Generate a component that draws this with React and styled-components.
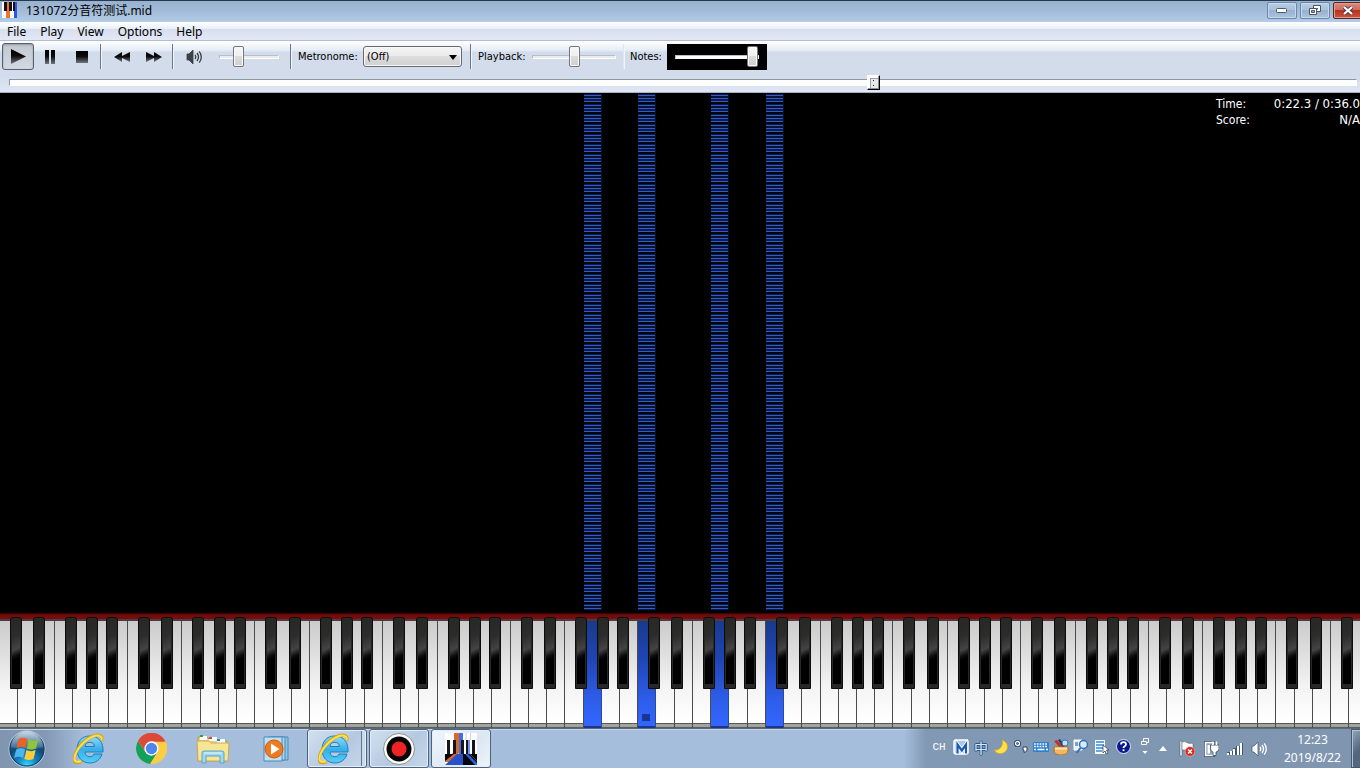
import React from "react";
import styled, { createGlobalStyle, css } from "styled-components";

const UI = `"Noto Sans", "Noto Sans CJK SC", sans-serif`;
const TAHOMA = `"DejaVu Sans Condensed", "DejaVu Sans", "Noto Sans CJK SC", sans-serif`;

const GlobalStyle = createGlobalStyle`
  *, *::before, *::after { box-sizing: border-box; }
  body { margin: 0; background: #000; font-family: ${UI}; overflow-x: hidden; }
  button, select, input { font: inherit; margin: 0; padding: 0; }
  svg { display: block; flex: none; }
`;

const Desktop = styled.div`
  display: flex;
  flex-direction: column;
  min-height: 100vh;
  overflow: hidden;
`;

/* ---------- window frame ---------- */
const TitleBar = styled.header`
  display: flex;
  align-items: flex-start;
  height: 22px;
  padding-left: 2px;
  border-top: 1px solid #26384c;
  background: linear-gradient(#98b1ce, #a2bcd9 50%, #b3cde8);
`;
const TitleIcon = styled.span`
  margin-top: 1px;
`;
const Title = styled.h1`
  flex: 1;
  margin: 0 0 0 8px;
  font: 12px/19px ${UI};
  color: #000;
`;
const CaptionButtons = styled.div`
  display: flex;
  gap: 3px;
  margin: 1px -3px 0 0;
`;
const CaptionButton = styled.button`
  display: grid;
  place-items: center;
  width: 30px;
  height: 17px;
  border: 1px solid ${(p) => (p.$close ? "#5b2422" : "#6d86a5")};
  border-radius: 2px;
  box-shadow: inset 0 0 0 1px ${(p) => (p.$close ? "#e39c90" : "#c6d9ee")};
  background: ${(p) =>
    p.$close
      ? "linear-gradient(#d98a7c, #cf6a5a 48%, #b8321e 50%, #c9553f)"
      : "linear-gradient(#b7cce4, #a9c1dc 48%, #97b1d0 50%, #a9c3e0)"};
`;

const MenuBar = styled.nav`
  display: flex;
  height: 19px;
  padding-left: 7px;
  gap: 14px;
  border-bottom: 1px solid #b4bccd;
  background: linear-gradient(#fff, #e9eff7 38%, #d6dfee 40%, #e4e7f6);
`;
const MenuItem = styled.button`
  border: 0;
  background: none;
  font: 12px/20px ${UI};
  color: #000;
`;

const Tools = styled.div`
  height: 52px;
  border-bottom: 1px solid #a9b0be;
  background: linear-gradient(#fff, #e6edf7 18%, #d3dcea 22%, #d3dcec 70%, #e0e7f5);
`;
const ToolRow = styled.div`
  display: flex;
  align-items: center;
  height: 31px;
  padding-left: 2px;
`;
const ToolButton = styled.button`
  display: grid;
  place-items: center;
  width: 32px;
  height: 27px;
  border: 1px solid transparent;
  border-radius: 3px;
  background: none;
  ${(p) =>
    p.$pressed &&
    css`
      border-color: #55606e;
      background: linear-gradient(#c3c8d0, #d3d9e2);
      box-shadow: inset 0 1px 2px #9098a4;
    `}
`;
const Separator = styled.span`
  width: 2px;
  height: 25px;
  margin: 0 ${(p) => p.$after}px 0 ${(p) => p.$before}px;
  border-left: 1px solid ${(p) => (p.$soft ? "#dfe6f1" : "#6c7688")};
  border-right: 1px solid #f2f6fb;
`;
const Label = styled.label`
  width: ${(p) => p.$width}px;
  white-space: nowrap;
  padding-top: 1px;
  font: 11px/14px ${TAHOMA};
  color: #000;
`;
const SelectBox = styled.span`
  position: relative;
  display: block;
`;
const Select = styled.select`
  display: block;
  appearance: none;
  width: 99px;
  height: 21px;
  padding-left: 3px;
  border: 1px solid #656a70;
  border-radius: 3px;
  background: linear-gradient(#f4f4f4, #ebebeb 48%, #dddddd 50%, #d0d0d0);
  box-shadow: inset 0 0 0 1px #f8f8f8;
  font: 11px/18px ${TAHOMA};
  color: #000;
`;
const SelectArrow = styled.svg`
  position: absolute;
  right: 5px;
  top: 9px;
  pointer-events: none;
`;
const VolumeSlot = styled.span`
  padding: 0 11px 0 9px;
`;
const Range = styled.input`
  appearance: none;
  display: block;
  width: ${(p) => p.$width}px;
  height: 22px;
  background: transparent;
  &::-webkit-slider-runnable-track {
    height: 4px;
    border: 1px solid #b9bfc8;
    border-bottom-color: #fff;
    border-right-color: #fff;
    background: ${(p) => (p.$bright ? "#fff" : "#e9ecef")};
  }
  &::-webkit-slider-thumb {
    appearance: none;
    width: 11px;
    height: 21px;
    margin-top: -10px;
    border: 1px solid #73777d;
    border-radius: 2px;
    background: linear-gradient(#f6f6f6, #efefef 48%, #dcdcdc 50%, #d0d0d0);
    box-shadow: inset 0 0 0 1px #fafafa;
  }
`;
const NotesBox = styled.span`
  display: grid;
  place-items: center;
  width: 100px;
  height: 26px;
  background: #000;
`;
const SeekRow = styled.div`
  padding: 3px 3px 0 9px;
`;
const Seek = styled.input`
  appearance: none;
  display: block;
  width: 100%;
  height: 15px;
  background: transparent;
  &::-webkit-slider-runnable-track {
    height: 7px;
    border: 1px solid #8f969f;
    border-bottom-color: #fff;
    border-right-color: #fff;
    background: #fff;
  }
  &::-webkit-slider-thumb {
    appearance: none;
    width: 13px;
    height: 15px;
    margin-top: -5px;
    border: 1px solid #fff;
    border-right-color: #000;
    border-bottom-color: #000;
    background:
      linear-gradient(#222, #222) 5px 4px / 1px 1px no-repeat,
      linear-gradient(#222, #222) 5px 9px / 1px 1px no-repeat,
      #e6e8ea;
    box-shadow: inset -1px -1px 0 #8a8f96, inset 2px 2px 0 #fff, inset 3px 3px 0 #9ca1a8;
  }
`;

/* ---------- falling notes ---------- */
const Stage = styled.main`
  display: flex;
  flex-direction: column;
  flex: 1;
  position: relative;
  min-height: 300px;
  background: #000;
`;
const Lanes = styled.div`
  display: flex;
  flex: 1;
  width: calc(100% + 7px);
  padding: 1px 0 3px;
`;
const Lane = styled.div`
  flex: 1 1 0;
  min-width: 0;
  border: solid #000;
  border-width: 0 1px 0 0;
  ${(p) =>
    p.$on &&
    css`
      border-color: #06102c;
      background: repeating-linear-gradient(
        #0a1b50 0 1px,
        #365cba 1px 2px,
        #07123c 2px 4px,
        #365cba 4px 5px,
        #0a1b55 5px 7px,
        #365cba 7px 8px,
        #02040c 8px 10px
      );
    `}
`;
const Stats = styled.dl`
  position: absolute;
  top: 3px;
  right: 0;
  display: grid;
  grid-template-columns: auto auto;
  justify-content: space-between;
  width: 144px;
  margin: 0;
  font: 12px/16px ${TAHOMA};
  color: #fff;
  dt, dd { margin: 0; }
  dd { font-size: 13px; text-align: right; }
`;

/* ---------- keyboard ---------- */
const Felt = styled.div`
  height: 8px;
  border-bottom: 2px solid #4a3e3e;
  background: linear-gradient(#2c0203, #6d0a0c 30%, #7d0c0e);
`;
const Keyboard = styled.div`
  display: flex;
  width: calc(100% + 7px);
  height: 107px;
`;
const WhiteKey = styled.div`
  position: relative;
  flex: 1 1 0;
  min-width: 0;
  border-right: 1px solid ${(p) => (p.$on ? "#2a4a9c" : "#4b4b4b")};
  background: ${(p) =>
    p.$on
      ? "linear-gradient(#183a8c, #1f45b4 35%, #2d5de8 72%, #3366ff 105px, #1a3690 105px)"
      : `linear-gradient(#cbcbcb, #e2e2e2 35%, #f4f4f4 62%, #fff 100px, #fff 102px,
         #55564f 102px, #55564f 103px, #a4a7a2 103px, #9fa19d 106px, #5b5f62 106px)`};
`;
const BlackKey = styled.div`
  position: absolute;
  z-index: 1;
  top: -4px;
  left: ${(p) => p.$left}px;
  width: 12px;
  height: 72px;
  border: 1px solid #0c0c0c;
  border-radius: 3px 3px 0 0;
  background: #282828;
  &::before {
    content: "";
    display: block;
    height: 66px;
    margin: 0 1px;
    background: linear-gradient(155deg, #272724, #2c2c2c 28%, #444 47%, #0c0c0c 57%, #000 62%);
  }
`;
const Marker = styled.span`
  position: absolute;
  left: 4px;
  bottom: 7px;
  width: 8px;
  height: 7px;
  background: #1a3690;
`;

/* ---------- taskbar ---------- */
const Taskbar = styled.footer`
  display: flex;
  height: 40px;
  border-top: 1px solid #5c6977;
  box-shadow: inset 0 1px 0 #c6d8ec;
  background: linear-gradient(90deg, #8096b0, #8399b5 46px, #a5bedb 84px, #a5bedb);
`;
const Launchers = styled.div`
  display: flex;
  flex: 1;
`;
const Launcher = styled.button`
  display: grid;
  place-items: center;
  width: ${(p) => p.$width}px;
  height: 39px;
  border: 0;
  background: none;
`;
const TaskButton = styled.button`
  display: grid;
  place-items: center;
  width: 60px;
  height: 39px;
  margin-right: 2px;
  border: 1px solid #4d627c;
  border-radius: 3px;
  box-shadow: inset 0 0 0 1px #e4eef8;
  background: ${(p) =>
    p.$active
      ? "linear-gradient(135deg, #f0f5fb, #dbe7f3 60%, #eef4fa)"
      : "linear-gradient(135deg, #d3e0ef, #b4c9e1 55%, #c6d7ea)"};
  ${(p) =>
    p.$stacked &&
    css`
      padding-right: 6px;
      box-shadow: inset 0 0 0 1px #e4eef8, inset -4px 0 0 #c9d9ea, inset -5px 0 0 #5f7690;
    `}
`;
const Tray = styled.div`
  display: flex;
  align-items: center;
  padding-left: 23px;
  background: linear-gradient(90deg, #a5bedb00, #8199b4 22px, #7f95b0);
`;
const TrayButton = styled.button`
  display: grid;
  place-items: center;
  width: ${(p) => p.$width || 20}px;
  height: 39px;
  padding: 0 ${(p) => (p.$padRight ? 4 : 0)}px ${(p) => (p.$ime ? 4 : 0)}px 0;
  border: 0;
  background: none;
  font: 11px/14px "Liberation Mono", monospace;
  color: #fff;
`;
const ImeMode = styled.span`
  font: 14px/16px "Noto Sans CJK SC", sans-serif;
  color: #d9e9fb;
  text-shadow: 1px 0 #2c588e, -1px 0 #2c588e, 0 1px #2c588e, 0 -1px #2c588e;
`;
const Clock = styled.time`
  width: 80px;
  padding-left: 3px;
  text-align: center;
  font: 12px/18px ${UI};
  color: #fff;
`;
const ShowDesktop = styled.button`
  width: 9px;
  height: 39px;
  border: 1px solid #46586d;
  border-right: 0;
  box-shadow: inset 1px 1px 0 #b3c3d6;
  background: linear-gradient(135deg, #95a6ba, #53667d 60%);
`;

/* ---------- drawings ---------- */
const AppIcon = ({ size }) => (
  <svg width={size} height={size} viewBox="0 0 32 32" aria-hidden="true">
    <rect width="32" height="32" fill="#fff" />
    <path d="M9 0h5v20L4 29H0v-2l9-8z" fill="#d9692a" />
    <path d="M14 0h4v21H14z" fill="#3f70e8" />
    <path d="M22 7h3v14h-3z" fill="#6b95f4" />
    <path d="M12 21h6v11H0z" fill="#2950c8" />
    <path d="M18 21h7l7 7v4H18z" fill="#05070f" />
    <path d="M20 21h3l9 9v2h-2z" fill="#2f5fe0" />
    <path d="M0 21h9l-9 7z" fill="#000" />
    <path d="M25 21h7v7z" fill="#000" />
    <path d="M2 7h3v14H2zM8 7h3v14H8zM16 7h3v14h-3zM21 7h2v14h-2zM27 7h3v14h-3z" fill="#16161a" />
    <path d="M20 0h1v7M25.500 0v7" fill="none" stroke="#b9c4d6" strokeWidth="0.800" />
  </svg>
);
const TitleAppIcon = () => (
  <svg width="16" height="16" viewBox="0 0 16 16" aria-hidden="true">
    <path d="M0 0h4v16H0z" fill="#fff" />
    <path d="M4 0h4v16H4z" fill="#e87830" />
    <path d="M8 0h4v16H8z" fill="#fff" />
    <path d="M12 0h3v16h-3z" fill="#2c55e0" />
    <path d="M2 0h3v9H2zM7 0h3v9H7zM11 0h2v9h-2z" fill="#161010" />
  </svg>
);
const Grad = ({ id }) => (
  <defs>
    <linearGradient id={id} x1="0" y1="0" x2="0" y2="1">
      <stop offset="0" stopColor="#000" />
      <stop offset="0.45" stopColor="#0a0a0a" />
      <stop offset="1" stopColor="#70767e" />
    </linearGradient>
  </defs>
);
const glyphs = {
  play: [15, 15, "M0 0 15 7.500 0 15z"],
  pause: [10, 14, "M0 0h4v14H0zM6 0h4v14H6z"],
  stop: [12, 12, "M0 0h12v12H0z"],
  rewind: [16, 10, "M0 5 8 0V4L16 0V10L8 6V10z"],
  forward: [16, 10, "M16 5 8 0V4L0 0V10L8 6V10z"],
};
const Glyph = ({ name }) => {
  const [w, h, d] = glyphs[name];
  return (
    <svg width={w} height={h} viewBox={`0 0 ${w} ${h}`} aria-hidden="true">
      <Grad id={`g-${name}`} />
      <path d={d} fill={`url(#g-${name})`} />
    </svg>
  );
};
const Speaker = ({ color, edge }) => (
  <svg width="17" height="16" viewBox="0 0 17 16" aria-hidden="true">
    <path d="M1 5h2l4-4v14l-4-4H1z" fill={color} stroke={edge || color} strokeWidth="0.8" />
    <g fill="none" stroke={color} strokeWidth="1.3">
      <path d="M9 6q1.5 2 0 4M11 4q3 4 0 8M13.2 2.4q4.2 5.6 0 11.2" />
    </g>
  </svg>
);
const StartOrb = () => (
  <svg width="38" height="38" viewBox="0 0 38 38" aria-hidden="true">
    <defs>
      <radialGradient id="orb" cx="0.5" cy="0.95" r="0.9">
        <stop offset="0" stopColor="#35d6ff" />
        <stop offset="0.3" stopColor="#1285c0" />
        <stop offset="0.62" stopColor="#134a79" />
        <stop offset="1" stopColor="#4f7396" />
      </radialGradient>
      <linearGradient id="gloss" x1="0" y1="0" x2="0" y2="1">
        <stop offset="0" stopColor="#e6f0f8" stopOpacity="0.85" />
        <stop offset="1" stopColor="#8db0cd" stopOpacity="0.25" />
      </linearGradient>
    </defs>
    <circle cx="19" cy="19" r="18" fill="url(#orb)" stroke="#b9d3e8" strokeWidth="1" />
    <circle cx="19" cy="19" r="17" fill="none" stroke="#173653" strokeWidth="1" />
    <path d="M3 17a16 16 0 0 1 32 0q-16 5-32 0z" fill="url(#gloss)" />
    <path d="M10.500 9q4.500-2.500 9 0L17.500 18q-4.500-2.500-9 0z" fill="#ea6326" />
    <path d="M20.800 9.500q4.500 2.500 9.500 0L28 18.500q-4.700 2.300-9.300 0z" fill="#8dc63a" />
    <path d="M8.200 19.500q4.500-2.500 9 0L15 28q-4.500-2.500-9 0z" fill="#4bb5ee" />
    <path d="M18.400 20q4.600 2.300 9.300 0L25.500 29q-4.600 2-9.200 0z" fill="#fbcb3a" />
  </svg>
);
const IE = () => (
  <svg width="32" height="32" viewBox="0 0 32 32" aria-hidden="true">
    <defs>
      <linearGradient id="ie" x1="0" y1="0" x2="0" y2="1">
        <stop offset="0" stopColor="#8fdcfa" />
        <stop offset="0.5" stopColor="#38aeea" />
        <stop offset="1" stopColor="#56cdf8" />
      </linearGradient>
    </defs>
    <path
      d="M16.500 3C8.500 3 4 9 4 16.500S9 30 17 30c6 0 10.500-3.500 12-9h-8c-.8 1.800-2.200 2.700-4.200 2.700-3 0-4.600-1.800-4.800-4.700H30C30.700 9 25.500 3 16.500 3zM12 13.500c.4-2.700 2-4.200 4.800-4.200 2.700 0 4.300 1.500 4.600 4.200z"
      fill="url(#ie)" stroke="#1b80bb" strokeWidth="1"
    />
    <path
      d="M28.500 8C30.500 1.500 24 .5 17 4.500 8 9.500 1 19.500 1.200 26.500c.2 3.800 4 3.600 7.300 1.800"
      fill="none" stroke="#d79b14" strokeWidth="3.200"
    />
    <path
      d="M28.500 7.500C30 2 24 1 17 4.800 8.500 9.500 1.500 19.500 1.500 26c.2 3.500 3.800 3.300 6.500 2"
      fill="none" stroke="#ffe14c" strokeWidth="2"
    />
  </svg>
);
const Chrome = () => (
  <svg width="31" height="31" viewBox="0 0 30 30" aria-hidden="true">
    <circle cx="15" cy="15" r="15" fill="#ffcd42" />
    <path d="M15 15 2 7.500A15 15 0 0 1 28.300 8.200H15z" fill="#db4a38" />
    <path d="M2 7.500A15 15 0 0 0 13.500 29.900L20.800 18.400 9.100 18.400z" fill="#12a05c" />
    <path d="M2 7.500A15 15 0 0 1 28.300 8.200H15L9.100 18.400z" fill="#db4a38" />
    <circle cx="15" cy="15" r="6.900" fill="#fff" />
    <circle cx="15" cy="15" r="5.500" fill="#4a87ee" />
  </svg>
);
const Folder = () => (
  <svg width="34" height="30" viewBox="0 0 34 30" aria-hidden="true">
    <path d="M2 3h9l2 2h8l2 2h8v20H2z" fill="#e8d383" stroke="#b89a4b" />
    <path d="M4 2h7v4H4zM13 3h8v4h-8zM21 5h8v4h-8z" fill="#fff" />
    <path d="M4 1h3v2H4z" fill="#1fb32f" />
    <path d="M13 3h3v2h-3z" fill="#d8452a" />
    <path d="M21 5h3v2h-3z" fill="#2a88d8" />
    <path d="M1 7h12l2 2h18l-1 18H2z" fill="#f5e594" stroke="#c7aa57" />
    <path d="M6 29V19q0-2 2-2h18q2 0 2 2v10h-4v-7H10v7z" fill="#9ed8ee" stroke="#5fa3c6" />
    <path d="M8 19h18" stroke="#e6f8ff" />
  </svg>
);
const MediaPlayer = () => (
  <svg width="30" height="26" viewBox="0 0 30 26" aria-hidden="true">
    <path d="M8 1h17v23H8z" fill="#8cc3e8" stroke="#4c8ab4" />
    <path d="M5 1h17v23H5z" fill="#a8d4f0" stroke="#4c8ab4" />
    <path d="M1 1h18v24H1z" fill="#bfe0f4" stroke="#4c8ab4" />
    <circle cx="11" cy="13" r="9" fill="#f07a1f" stroke="#c85a10" />
    <path d="M8 7.500 16.500 13 8 18.500z" fill="#fff" />
  </svg>
);
const Record = () => (
  <svg width="32" height="32" viewBox="0 0 32 32" aria-hidden="true">
    <circle cx="16" cy="16" r="15.500" fill="#fff" stroke="#777" strokeWidth="0.8" />
    <circle cx="16" cy="16" r="12.500" fill="#050505" />
    <circle cx="16" cy="16" r="7.500" fill="#ee2424" />
  </svg>
);

const MIcon = () => (
  <svg width="16" height="16" viewBox="0 0 16 16" aria-hidden="true">
    <rect x="1" y="1" width="14" height="14" rx="2" fill="#a9c8ec" stroke="#fff" strokeWidth="1.500" />
    <path d="M4.500 14.500V5.500l4.300 6 4.200-6v9" fill="none" stroke="#fff" strokeWidth="4" />
    <path d="M4.500 14.500V5.500l4.300 6 4.200-6v9" fill="none" stroke="#1c5cb8" strokeWidth="2.200" />
  </svg>
);
const Moon = () => (
  <svg width="14" height="14" viewBox="0 0 14 14" aria-hidden="true">
    <path d="M8 0c6 2 7 8 3.500 11.500S2.500 14 0 10c5 1 10-4 8-10z" fill="#ffe14a" stroke="#d9a520" strokeWidth="0.8" />
  </svg>
);
const Punct = () => (
  <svg width="14" height="13" viewBox="0 0 14 13" aria-hidden="true">
    <circle cx="3.500" cy="3.500" r="2" fill="none" stroke="#24456f" strokeWidth="3" />
    <circle cx="3.500" cy="3.500" r="2" fill="none" stroke="#fff" strokeWidth="1.300" />
    <path d="M9 7h4v3q0 2-3 2.500V10H9z" fill="#fff" stroke="#24456f" strokeWidth="1" />
  </svg>
);
const Keys = () => (
  <svg width="16" height="10" viewBox="0 0 16 10" aria-hidden="true">
    <rect width="16" height="10" rx="1" fill="#2d7fcf" />
    <path d="M1 2h14M1 4.500h14" stroke="#fff" strokeWidth="1.500" strokeDasharray="1.800 1" />
    <path d="M1 7.500h2M4.500 7.500h7M13 7.500h2" stroke="#fff" strokeWidth="1.500" />
  </svg>
);
const Toolbox = () => (
  <svg width="16" height="16" viewBox="0 0 16 16" aria-hidden="true">
    <path d="m1 2 3-1 6 7-3 1z" fill="#c92f22" />
    <path d="m5 1 2-1 5 7-2 2z" fill="#2c3a66" />
    <circle cx="12" cy="4" r="3" fill="#bfe0f8" stroke="#3b76b8" />
    <path d="M1 8h14v3q0 5-7 5t-7-5z" fill="#f4b65e" stroke="#b8701e" />
    <path d="M2 8.500h12v2H2z" fill="#fde4b4" />
  </svg>
);
const SearchPage = () => (
  <svg width="16" height="15" viewBox="0 0 16 15" aria-hidden="true">
    <path d="M1 1h8v10H1z" fill="#e8f1fa" stroke="#fff" />
    <path d="M2 4h3M2 6h3" stroke="#29486e" />
    <circle cx="10.500" cy="5.500" r="4" fill="#d6ecfb" stroke="#2f70b2" strokeWidth="1.500" />
    <path d="m7.500 9-4 5" stroke="#2f70b2" strokeWidth="2" />
  </svg>
);
const Page = () => (
  <svg width="15" height="16" viewBox="0 0 15 16" aria-hidden="true">
    <path d="M1 1h10v14H1z" fill="#f3f9ff" />
    <path d="M2 3h8M2 6h8M2 9h8M2 12h6" stroke="#3a8ad6" strokeWidth="1.500" />
    <path d="M9 6v8l2-2 1.500 3 1.500-1-1.500-3H15z" fill="#fff" stroke="#333" strokeWidth="0.700" />
  </svg>
);
const HelpIcon = () => (
  <svg width="15" height="15" viewBox="0 0 15 15" aria-hidden="true">
    <circle cx="7.500" cy="7.500" r="7" fill="#0a1a8c" stroke="#dfe6f5" />
    <path d="M5 5.500q0-2.300 2.500-2.300T10 5.300q0 1.200-1.300 1.900-1.200.6-1.200 1.800" fill="none" stroke="#fff" strokeWidth="1.800" />
    <path d="M6.600 10.300h1.900v1.800H6.600z" fill="#fff" />
  </svg>
);
const RestoreTray = () => (
  <svg width="8" height="17" viewBox="0 0 8 17" aria-hidden="true">
    <path d="M2.500 3V.5h5v4H6M.5 3.500h5v3h-5z" fill="none" stroke="#fff" />
    <path d="M1.500 13h5L4 16z" fill="#fff" />
  </svg>
);
const UpArrow = () => (
  <svg width="8" height="5" viewBox="0 0 8 5" aria-hidden="true">
    <path d="M0 5 4 0l4 5z" fill="#fff" />
  </svg>
);
const Flag = () => (
  <svg width="16" height="17" viewBox="0 0 16 17" aria-hidden="true">
    <path d="M1 1h2v15H1z" fill="#fff" stroke="#3a4c62" strokeWidth="0.500" />
    <path d="M3 2q3-1 5 .5T14 3v7H3z" fill="#fff" stroke="#3a4c62" strokeWidth="0.500" />
    <circle cx="11" cy="11.500" r="4.800" fill="#d8281e" stroke="#f4b8b2" strokeWidth="0.600" />
    <path d="m9 9.500 4 4m0-4-4 4" stroke="#fff" strokeWidth="1.500" />
  </svg>
);
const Plug = () => (
  <svg width="15" height="17" viewBox="0 0 15 17" aria-hidden="true">
    <path d="M1.500 2.500h8v13h-8z" fill="#7f95b0" stroke="#33465e" strokeWidth="3" />
    <path d="M1.500 2.500h8v13h-8z" fill="#8ea3bd" stroke="#fff" strokeWidth="1.600" />
    <path d="M3.500 5H6v8.500H3.500z" fill="#fff" />
    <path d="M6.500 5H15v4q0 2.500-3 3v3.500H9V12q-2.500-.5-2.500-3z" fill="#fff" stroke="#33465e" strokeWidth="0.800" />
    <path d="M8.800 1.500V5M12.500 1.500V5" stroke="#fff" strokeWidth="1.500" />
  </svg>
);
const Signal = () => (
  <svg width="16" height="13" viewBox="0 0 16 13" aria-hidden="true">
    <path d="M0 10h3v3H0zM3 9h3v4H3zM6 6h3v7H6zM9 4h4v9H9zM13 1h3v12h-3z" fill="#43566e" />
    <path d="M0 11h2v2H0zM3 9h2v4H3zM6 7h2v6H6zM10 4h2v9h-2zM13 1h2v12h-2z" fill="#fff" />
  </svg>
);

/* ---------- data ---------- */
const WHITE_KEYS = Array.from({ length: 75 }, (_, i) => i);
const PRESSED = [32, 35, 39, 42];
const SHARP_OFFSET = { 0: 10, 1: 15, 3: 10, 4: 13, 5: 15 };
const MENUS = ["File", "Play", "View", "Options", "Help"];
const IME = [
  ["Input method", MIcon],
  ["Chinese mode", null],
  ["Half width", Moon],
  ["Punctuation", Punct],
  ["Soft keyboard", Keys],
  ["Tools", Toolbox],
  ["Search", SearchPage],
  ["Options list", Page],
];

export default function App() {
  return (
    <Desktop>
      <GlobalStyle />
      <TitleBar>
        <TitleIcon><TitleAppIcon /></TitleIcon>
        <Title>131072分音符测试.mid</Title>
        <CaptionButtons>
          <CaptionButton aria-label="Minimize">
            <svg width="12" height="5" viewBox="0 0 12 5">
              <rect x="0.500" y="0.500" width="10" height="4" rx="1" fill="#fff" stroke="#4c5665" />
            </svg>
          </CaptionButton>
          <CaptionButton aria-label="Restore">
            <svg width="12" height="11" viewBox="0 0 12 11">
              <path d="M4.500.5h7v6h-7z" fill="#fff" stroke="#4c5665" />
              <path d="M7 3h2v1.500H7z" fill="#4c5665" />
              <path d="M.5 3.500h7v6h-7z" fill="#fff" stroke="#4c5665" />
              <path d="M2.500 5.500h3v2h-3z" fill="#9fb6d0" stroke="#4c5665" />
            </svg>
          </CaptionButton>
          <CaptionButton $close aria-label="Close">
            <svg width="12" height="9" viewBox="0 0 12 9">
              <path d="m2 1 8 7M10 1 2 8" stroke="#4c3a44" strokeWidth="4" />
              <path d="m2 1 8 7M10 1 2 8" stroke="#fff" strokeWidth="2.200" />
            </svg>
          </CaptionButton>
        </CaptionButtons>
      </TitleBar>
      <MenuBar>
        {MENUS.map((m) => <MenuItem key={m}>{m}</MenuItem>)}
      </MenuBar>
      <Tools>
        <ToolRow>
          <ToolButton $pressed aria-label="Play"><Glyph name="play" /></ToolButton>
          <ToolButton aria-label="Pause"><Glyph name="pause" /></ToolButton>
          <ToolButton aria-label="Stop"><Glyph name="stop" /></ToolButton>
          <Separator $before={2} $after={4} />
          <ToolButton aria-label="Rewind"><Glyph name="rewind" /></ToolButton>
          <ToolButton aria-label="Fast forward"><Glyph name="forward" /></ToolButton>
          <Separator $before={2} $after={4} />
          <ToolButton aria-label="Mute"><Speaker color="#3c4048" /></ToolButton>
          <VolumeSlot>
            <Range $width={60} type="range" defaultValue={27} aria-label="Volume" />
          </VolumeSlot>
          <Separator $before={0} $after={6} />
          <Label $width={65} htmlFor="metronome">Metronome:</Label>
          <SelectBox>
            <Select id="metronome" defaultValue="off">
              <option value="off">(Off)</option>
            </Select>
            <SelectArrow width="8" height="5" viewBox="0 0 8 5"><path d="M0 0h8L4 5z" /></SelectArrow>
          </SelectBox>
          <Separator $before={8} $after={6} />
          <Label $width={54} htmlFor="playback">Playback:</Label>
          <Range $width={84} id="playback" type="range" defaultValue={50} />
          <Separator $soft $before={7} $after={5} />
          <Label $width={37} htmlFor="notes">Notes:</Label>
          <NotesBox>
            <Range $width={84} $bright id="notes" type="range" defaultValue={100} />
          </NotesBox>
        </ToolRow>
        <SeekRow>
          <Seek type="range" min={0} max={1000} defaultValue={643} aria-label="Song position" />
        </SeekRow>
      </Tools>

      <Stage>
        <Lanes>
          {WHITE_KEYS.map((i) => <Lane key={i} $on={PRESSED.includes(i)} />)}
        </Lanes>
        <Stats>
          <dt>Time:</dt>
          <dd>0:22.3 / 0:36.0</dd>
          <dt>Score:</dt>
          <dd>N/A</dd>
        </Stats>
      </Stage>
      <Felt />
      <Keyboard>
        {WHITE_KEYS.map((i) => (
          <WhiteKey key={i} $on={PRESSED.includes(i)}>
            {SHARP_OFFSET[i % 7] !== undefined && i < 74 && <BlackKey $left={SHARP_OFFSET[i % 7]} />}
            {i === 35 && <Marker />}
          </WhiteKey>
        ))}
      </Keyboard>

      <Taskbar>
        <Launchers>
          <Launcher $width={54} aria-label="Start"><StartOrb /></Launcher>
          <Launcher $width={70} aria-label="Internet Explorer"><IE /></Launcher>
          <Launcher $width={54} aria-label="Chrome"><Chrome /></Launcher>
          <Launcher $width={70} aria-label="Explorer"><Folder /></Launcher>
          <Launcher $width={59} aria-label="Media Player"><MediaPlayer /></Launcher>
          <TaskButton $stacked aria-label="Internet Explorer windows"><IE /></TaskButton>
          <TaskButton aria-label="Recorder"><Record /></TaskButton>
          <TaskButton $active aria-label="Piano"><AppIcon size={32} /></TaskButton>
        </Launchers>
        <Tray>
          <TrayButton $ime $width={24} aria-label="Language">CH</TrayButton>
          {IME.map(([name, Icon]) => (
            <TrayButton key={name} $ime aria-label={name}>
              {Icon ? <Icon /> : <ImeMode>中</ImeMode>}
            </TrayButton>
          ))}
          <TrayButton $ime $width={24} aria-label="Help"><HelpIcon /></TrayButton>
          <TrayButton $ime aria-label="Restore language bar"><RestoreTray /></TrayButton>
          <TrayButton $padRight aria-label="Show hidden icons"><UpArrow /></TrayButton>
          <TrayButton $width={24} aria-label="Action center"><Flag /></TrayButton>
          <TrayButton $width={24} aria-label="Power"><Plug /></TrayButton>
          <TrayButton $width={24} aria-label="Network"><Signal /></TrayButton>
          <TrayButton $width={24} aria-label="Volume"><Speaker color="#fff" edge="#4a5e77" /></TrayButton>
          <Clock>12:23<br />2019/8/22</Clock>
          <ShowDesktop aria-label="Show desktop" />
        </Tray>
      </Taskbar>
    </Desktop>
  );
}
